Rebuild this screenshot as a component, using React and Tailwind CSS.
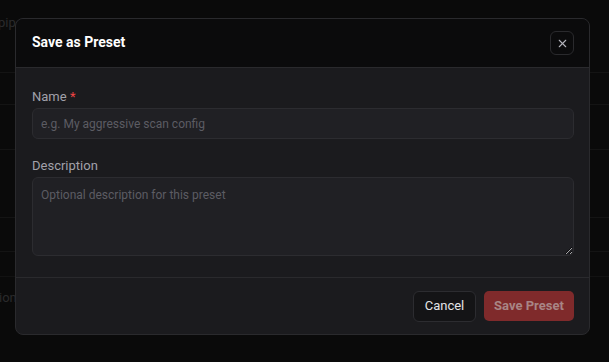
import React from "react";
import { X } from "lucide-react";

export default function App() {
  const font = { fontFamily: 'Roboto, "Noto Sans", sans-serif' };
  return (
    <div className="relative w-[609px] h-[362px] overflow-hidden bg-[#0a0a0a]" style={font}>
      {/* faint background page */}
      <div className="absolute inset-0 flex flex-col">
        <div className="h-[45px] flex items-center text-[13px] text-[#2a2a2c]">
          <span className="-ml-[2px]">pipe</span>
        </div>
        <div className="h-[28px] border-b border-[#141414]" />
        <div className="h-[32px] border-b border-[#141414]" />
        <div className="h-[45px] border-b border-[#141414]" />
        <div className="h-[68px] border-b border-[#141414]" />
        <div className="h-[34px] border-b border-[#141414]" />
        <div className="h-[25px] border-b border-[#121212]" />
        <div className="h-[42px] flex items-center text-[13px] text-[#2a2a2c]">
          <span className="-ml-[1px]">ion</span>
        </div>
      </div>

      <div className="relative pt-[18px] pl-[15px]">
        <div className="w-[575px] h-[317px] rounded-[8px] border border-[#2a2a2d] bg-[#1b1b1e] overflow-hidden flex flex-col">
          <div className="h-[49px] shrink-0 bg-[#0b0b0c] border-b border-[#2a2a2d] flex items-center justify-between pl-4 pr-[15px]">
            <h2 className="text-[14px] font-bold text-white -mt-[2px]">Save as Preset</h2>
            <button className="w-[24px] h-[24px] rounded-[6px] border border-[#2a2a2d] flex items-center justify-center text-[#b4b4bb]">
              <X size={13} strokeWidth={2} />
            </button>
          </div>

          <div className="flex-1 pl-4 pr-[15px] pt-[20px]">
            <label className="block h-[18px] leading-[18px] text-[13px] text-[#a1a1aa] mb-[2px]">
              Name <span className="text-[#ef4444]">*</span>
            </label>
            <input
              className="block w-full h-[31px] rounded-[6px] border border-[#2c2c30] bg-[#202024] px-2 text-[12px] text-white placeholder:text-[#5c5c63] outline-none"
              placeholder="e.g. My aggressive scan config"
              style={font}
            />
            <label className="block mt-[18px] h-[18px] leading-[18px] text-[13px] text-[#a1a1aa] mb-[2px]">
              Description
            </label>
            <textarea
              className="block w-full h-[79px] rounded-[6px] border border-[#2c2c30] bg-[#202024] px-2 py-[8px] text-[12px] text-white placeholder:text-[#5c5c63] outline-none"
              placeholder="Optional description for this preset"
              style={font}
            />
          </div>

          <div className="h-[57px] shrink-0 border-t border-[#2a2a2d] flex items-center justify-end gap-2 pl-4 pr-[15px]">
            <button className="h-[31px] w-[63px] rounded-[6px] border border-[#2c2c30] bg-[#141416] text-[13px] text-[#e4e4e7]">
              Cancel
            </button>
            <button className="h-[30px] w-[90px] rounded-[5px] bg-[#7f2a2b] text-[13px] font-bold text-[#a88585]">
              Save Preset
            </button>
          </div>
        </div>
      </div>
    </div>
  );
}
